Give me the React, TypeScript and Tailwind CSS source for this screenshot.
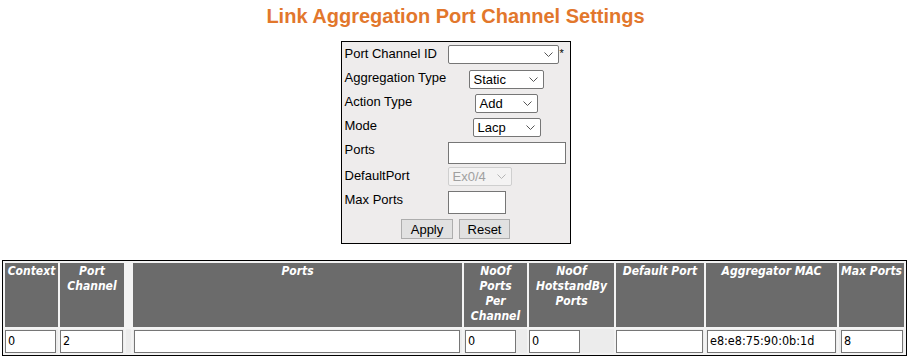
import React from 'react';

const Chevron = ({ light }: { light?: boolean }) => (
  <svg width="9" height="5" viewBox="0 0 9 5" className="shrink-0">
    <path d="M0.5 0.5 L4.5 4.5 L8.5 0.5" fill="none" stroke={light ? '#b5b5b5' : '#555'} strokeWidth="1" />
  </svg>
);

const FakeSelect = ({ value, className, disabled }: { value?: string; className: string; disabled?: boolean }) => (
  <div
    className={`flex h-[19px] items-center justify-between rounded-[2px] border pl-[4px] pr-[5px] text-[13px] leading-none ${
      disabled ? 'border-[#cfcfcf] bg-[#f4f3f3] text-[#a0a0a0]' : 'border-[#767676] bg-white text-black'
    } ${className}`}
  >
    <span>{value ?? ''}</span>
    <Chevron light={disabled} />
  </div>
);

const FormRow = ({ label, pad = 'pt-px', children }: { label: string; pad?: string; children: React.ReactNode }) => (
  <div className="flex h-6 items-start">
    <div className={`w-[103px] shrink-0 ${pad} text-[13px] leading-[15px]`}>{label}</div>
    <div className="flex w-[118px]">{children}</div>
  </div>
);

const headers = [
  { label: 'Context', w: 'w-[53px]' },
  { label: 'Port\nChannel', w: 'w-[64px]' },
  { label: '', w: 'w-[5px]', spacer: true },
  { label: 'Ports', w: 'w-[329px]' },
  { label: 'NoOf\nPorts\nPer\nChannel', w: 'w-[63px]' },
  { label: 'NoOf\nHotstandBy\nPorts', w: 'w-[85px]' },
  { label: 'Default Port', w: 'w-[88px]' },
  { label: 'Aggregator MAC', w: 'w-[131px]' },
  { label: 'Max Ports', w: 'w-[65px]' },
];

const cells = [
  { value: '0', input: 'w-[51px]' },
  { value: '2', input: 'w-[63px]' },
  { spacer: true },
  { value: '', input: 'w-[326px] ml-[1px]' },
  { value: '0', input: 'w-[51px] ml-[1px]' },
  { value: '0', input: 'w-[51px]' },
  { value: '', input: 'w-[87px]' },
  { value: 'e8:e8:75:90:0b:1d', input: 'w-[129px] ml-[1px]' },
  { value: '8', input: 'w-[62px] ml-[2px]' },
];

export default function App() {
  return (
    <div className="h-[362px] w-[911px] bg-white font-['Liberation_Sans',Arial,sans-serif] text-black">
      <h1 className="pt-[4px] text-center text-[20px] font-bold leading-[24px] text-[#e2772c]">
        Link Aggregation Port Channel Settings
      </h1>

      <div className="mx-auto mt-[13px] h-[203px] w-[230px] border border-black bg-[#eeecec] pl-[3px] pt-[3px]">
        <FormRow label="Port Channel ID">
          <FakeSelect className="w-[111px]" />
          <span className="ml-[1px] mt-[3px] text-[11px] leading-[11px]">*</span>
        </FormRow>
        <FormRow label="Aggregation Type">
          <FakeSelect value="Static" className="ml-[21px] mt-[1px] w-[75px]" />
        </FormRow>
        <FormRow label="Action Type">
          <FakeSelect value="Add" className="ml-[27px] mt-[1px] w-[63px]" />
        </FormRow>
        <FormRow label="Mode">
          <FakeSelect value="Lacp" className="ml-[25px] mt-[1px] w-[68px]" />
        </FormRow>
        <FormRow label="Ports">
          <div className="mt-[1px] h-[22px] w-[118px] border border-[#767676] bg-white" />
        </FormRow>
        <FormRow label="DefaultPort" pad="pt-[3px]">
          <FakeSelect value="Ex0/4" disabled className="mt-[2px] w-[64px]" />
        </FormRow>
        <FormRow label="Max Ports" pad="pt-[3px]">
          <div className="mt-[2px] h-[23px] w-[58px] border border-[#767676] bg-white" />
        </FormRow>
        <div className="mt-[6px] flex justify-center gap-[6px] pr-[3px]">
          <button className="h-[20px] w-[52px] border border-[#adadad] bg-[#e1e1e1] text-[13px] leading-none">Apply</button>
          <button className="h-[20px] w-[51px] border border-[#adadad] bg-[#e1e1e1] text-[13px] leading-none">Reset</button>
        </div>
      </div>

      <table className="ml-[2px] mt-[16px] w-[905px] table-fixed border-separate border-spacing-[2px] border border-black bg-[#f3f3f3] font-['DejaVu_Sans_Condensed','DejaVu_Sans',Tahoma,sans-serif]">
        <tbody>
          <tr>
            {headers.map((h, i) => (
              <th
                key={i}
                className={`${h.w} h-[64px] whitespace-pre-line px-0 pt-[1px] align-top text-[12px] font-bold italic leading-[15px] text-white ${
                  h.spacer ? 'bg-transparent' : 'bg-[#6b6b6b]'
                }`}
              >
                {h.label}
              </th>
            ))}
          </tr>
          <tr>
            {cells.map((c, i) => (
              <td key={i} className="h-[24px] bg-[#ececec] p-0 align-middle">
                {!c.spacer && (
                  <div
                    className={`${c.input} flex h-[23px] items-center border border-[#767676] bg-white pl-[2px] text-[12.5px] leading-none`}
                  >
                    {c.value}
                  </div>
                )}
              </td>
            ))}
          </tr>
        </tbody>
      </table>
    </div>
  );
}
